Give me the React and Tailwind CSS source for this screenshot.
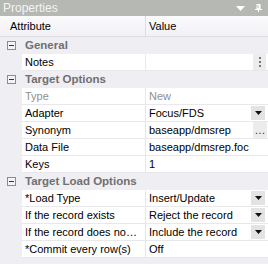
import React from 'react';

const font = { fontFamily: '"Liberation Sans", Arial, sans-serif' };

const DropBtn = () => (
    <div className="w-[14px] h-[14px] bg-[#e3e3e3] flex items-center justify-center mr-[3px]">
        <svg width="7" height="4" viewBox="0 0 7 4"><path d="M0 0h7L3.5 4z" fill="#111" /></svg>
    </div>
);

const DotsBtn = () => (
    <div className="w-[14px] h-[16px] bg-[#ececec] flex items-center justify-center text-[11px] text-[#333] mr-[1px]">…</div>
);

const VDotsBtn = () => (
    <div className="w-[13px] h-[16px] bg-[#ececec] flex flex-col items-center justify-center gap-[2px] mr-[2px]">
        <span className="w-[2px] h-[2px] bg-[#777]"></span>
        <span className="w-[2px] h-[2px] bg-[#777]"></span>
        <span className="w-[2px] h-[2px] bg-[#777]"></span>
    </div>
);

const Category = ({ label }) => (
    <div className="h-[17px] flex items-center bg-[#efeef3]">
        <div className="w-[22px] flex justify-center">
            <div className="w-[9px] h-[9px] border border-[#8c8c8c] bg-[#f4f4f4] flex items-center justify-center">
                <span className="w-[5px] h-px bg-[#333]"></span>
            </div>
        </div>
        <span className="pl-[3px] text-[11.5px] font-bold text-[#707070] whitespace-nowrap">{label}</span>
    </div>
);

const Row = ({ name, value, muted, btn }) => (
    <div className="h-[17px] flex bg-[#efeef3]">
        <div className="w-[22px] shrink-0"></div>
        <div className={`w-[124px] shrink-0 bg-white border-b border-r border-[#e8e7ec] pl-[3px] flex items-center text-[11px] whitespace-nowrap overflow-hidden ${muted ? 'text-[#8f8f8f]' : 'text-black'}`}>
            {name}
        </div>
        <div className={`flex-1 bg-white border-b border-[#e8e7ec] pl-[3px] flex items-center justify-between text-[11px] whitespace-nowrap ${muted ? 'text-[#8f8f8f]' : 'text-black'}`}>
            <span>{value}</span>
            {btn === 'drop' && <DropBtn />}
            {btn === 'dots' && <DotsBtn />}
            {btn === 'vdots' && <VDotsBtn />}
        </div>
    </div>
);

export default function App() {
    return (
        <div className="w-[268px] h-[264px] bg-[#efeef3] overflow-hidden" style={font}>
            {/* // Title bar */}
            <div className="h-[16px] bg-[#b6b8b4] flex items-center justify-between pl-[3px] pr-[6px]">
                <span className="text-[12px] text-[#f4f4f4]">Properties</span>
                <div className="flex items-center gap-[10px]">
                    <svg width="9" height="5" viewBox="0 0 9 5"><path d="M0 0h9L4.5 5z" fill="#fff" /></svg>
                    <svg width="7" height="8" viewBox="0 0 7 8">
                        <path d="M1.5 0h4v5h-4z M2.5 1h1v3h-1z M0 5h7v1H0z M3 6h1v2H3z" fill="#fff" fillRule="evenodd" />
                    </svg>
                </div>
            </div>
            {/* // Header */}
            <div className="h-[21px] flex bg-gradient-to-b from-[#fbfbfd] to-[#f1f1f6] border-b border-[#dddce1] text-[11px] text-black">
                <div className="w-[146px] pl-[10px] flex items-center border-r border-[#dddce1]">Attribute</div>
                <div className="flex-1 pl-[3px] flex items-center">Value</div>
            </div>
            {/* // Rows */}
            <Category label="General" />
            <Row name="Notes" value="" btn="vdots" />
            <Category label="Target Options" />
            <Row name="Type" value="New" muted />
            <Row name="Adapter" value="Focus/FDS" btn="drop" />
            <Row name="Synonym" value="baseapp/dmsrep" btn="dots" />
            <Row name="Data File" value="baseapp/dmsrep.foc" />
            <Row name="Keys" value="1" />
            <Category label="Target Load Options" />
            <Row name="*Load Type" value="Insert/Update" btn="drop" />
            <Row name="If the record exists" value="Reject the record" btn="drop" />
            <Row name="If the record does no…" value="Include the record" btn="drop" />
            <Row name="*Commit every row(s)" value="Off" />
        </div>
    );
}
